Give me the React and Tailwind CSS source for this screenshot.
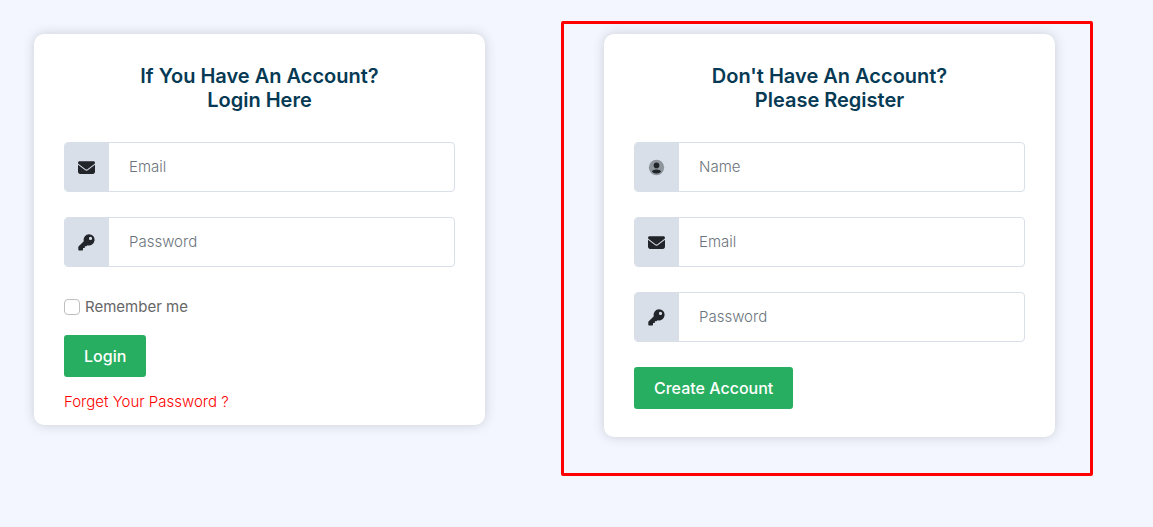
import { useId } from "react";
import { FaEnvelope } from "react-icons/fa6";

function UserIcon({ className }) {
  return (
    <svg viewBox="0 0 17 17" className={className} fill="currentColor" aria-hidden="true">
      <circle cx="8.500" cy="8.500" r="7.700" opacity="0.4" />
      <circle cx="8.500" cy="6.400" r="2.800" />
      <path d="M3.800 12.600c.7-1.500 2.300-2.200 4.700-2.200s4 .7 4.700 2.200a6 6 0 0 1-4.700 1.900 6 6 0 0 1-4.700-1.900Z" />
    </svg>
  );
}

function KeyIcon({ className }) {
  return (
    <svg viewBox="0 0 17 17" className={className} fill="currentColor" aria-hidden="true">
      <path
        fillRule="evenodd"
        d="M11 .2a5.600 5.600 0 1 1-1.500 11L8.400 12.300H6.800v1.800H5v1.700c0 .4-.3.700-.7.700H1c-.4 0-.7-.3-.7-.7V13c0-.2.100-.4.200-.5l5.300-5.300A5.600 5.600 0 0 1 11 .2Zm1.500 2.600a1.600 1.600 0 1 0 0 3.200 1.600 1.600 0 0 0 0-3.200Z"
      />
    </svg>
  );
}

function Card({ children, className = "" }) {
  return (
    <section
      className={`rounded-[10px] bg-white px-[30px] pt-[30px] shadow-[0_0_12px_rgba(40,50,40,0.2)] ${className}`}
    >
      {children}
    </section>
  );
}

function Title({ first, second }) {
  return (
    <h2 className="text-center text-xl leading-6 font-semibold text-[#063a54]">
      {first}
      <br />
      {second}
    </h2>
  );
}

function Field({ label, type, icon: Icon }) {
  const id = useId();
  return (
    <div className="flex h-[50px] overflow-hidden rounded border border-[#d8dfe9] bg-white">
      <label
        htmlFor={id}
        aria-label={label}
        className="flex w-11 shrink-0 items-center justify-center bg-[#d8dfe9] pr-px text-[#212529]"
      >
        <Icon className="size-[17px]" />
      </label>
      <input
        id={id}
        type={type}
        placeholder={label}
        className="min-w-0 flex-1 px-5 text-[15px] font-light text-[#212529] outline-none placeholder:text-[#6c757d]"
      />
    </div>
  );
}

function SubmitButton({ children }) {
  return (
    <button
      type="submit"
      className="h-[42px] rounded-[3px] bg-[#28ae61] px-5 text-base font-medium text-white"
    >
      {children}
    </button>
  );
}

export default function App() {
  return (
    <main className="min-h-screen bg-[#f3f6ff] pt-[34px] pr-[98px] pb-[51px] pl-[34px] font-['Inter',sans-serif]">
      <div className="grid grid-cols-1 items-start gap-[119px] md:grid-cols-2">
        <Card className="pb-[11px]">
          <Title first="If You Have An Account?" second="Login Here" />
          <form className="mt-[30px]" onSubmit={(e) => e.preventDefault()}>
            <div className="flex flex-col gap-[25px]">
              <Field label="Email" type="email" icon={FaEnvelope} />
              <Field label="Password" type="password" icon={KeyIcon} />
            </div>
            <label className="mt-7 flex h-6 w-fit items-center gap-[5px] text-[15px] text-[#666666]">
              <input
                type="checkbox"
                className="size-4 appearance-none rounded border border-[#bfbfbf] bg-white checked:bg-[#28ae61]"
              />
              Remember me
            </label>
            <div className="mt-4">
              <SubmitButton>Login</SubmitButton>
            </div>
            <a
              href="#forgot"
              className="mt-[13px] block w-fit text-[15px] leading-6 font-light text-[#ff0000]"
            >
              Forget Your Password ?
            </a>
          </form>
        </Card>

        <div className="relative">
          <Card className="pb-7">
            <Title first="Don't Have An Account?" second="Please Register" />
            <form className="mt-[30px]" onSubmit={(e) => e.preventDefault()}>
              <div className="flex flex-col gap-[25px]">
                <Field label="Name" type="text" icon={UserIcon} />
                <Field label="Email" type="email" icon={FaEnvelope} />
                <Field label="Password" type="password" icon={KeyIcon} />
              </div>
              <div className="mt-[25px]">
                <SubmitButton>Create Account</SubmitButton>
              </div>
            </form>
          </Card>
          <div className="pointer-events-none absolute -top-[13px] -right-[38px] -bottom-[39px] -left-[43px] rounded-[2px] border-3 border-[#ff0000]" />
        </div>
      </div>
    </main>
  );
}
